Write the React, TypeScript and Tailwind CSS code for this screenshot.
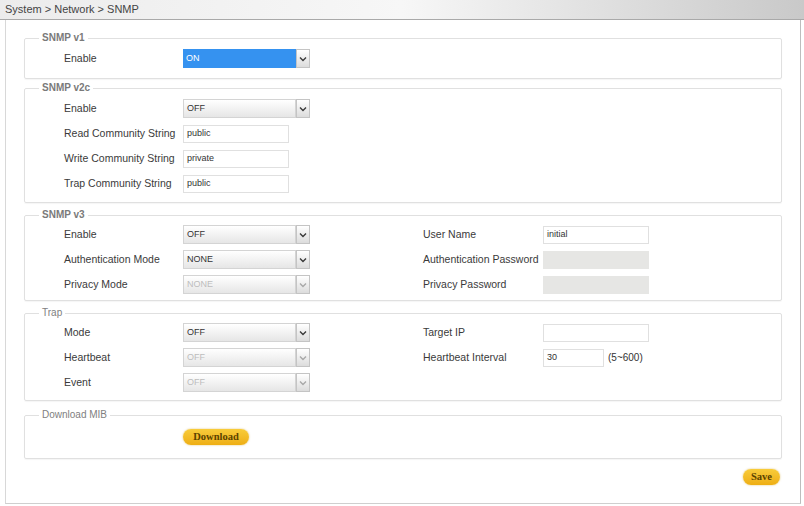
import type { ReactNode } from "react";

const font = { fontFamily: '"Liberation Sans", Arial, sans-serif' };

function Select({
	value,
	disabled,
	active,
}: {
	value: string;
	disabled?: boolean;
	active?: boolean;
}) {
	return (
		<div className="flex h-[19px] w-[127px]">
			<div
				className={
					active
						? "flex flex-1 items-center bg-[#3592f0] pl-[3px] text-[9px] text-white"
						: "flex flex-1 items-center border border-[#d4d4d4] bg-gradient-to-b from-white to-[#e6e6e6] pl-[3px] text-[9px] " +
							(disabled ? "text-[#bdbdbd]" : "text-[#333]")
				}
			>
				{value}
			</div>
			<div className="flex w-[14px] items-center justify-center border border-[#c4c4c4] bg-gradient-to-b from-white to-[#dcdcdc]">
				<svg width="8" height="6" viewBox="0 0 8 6">
					<path
						d="M1 1.5 L4 4.5 L7 1.5"
						fill="none"
						stroke={disabled ? "#a8a8a8" : "#3a3a3a"}
						strokeWidth="1.4"
					/>
				</svg>
			</div>
		</div>
	);
}

function TextBox({
	value,
	width = "w-[106px]",
	disabled,
}: {
	value?: string;
	width?: string;
	disabled?: boolean;
}) {
	return (
		<div
			className={
				disabled
					? `flex h-[18px] ${width} items-center bg-[#e6e6e4]`
					: `flex h-[18px] ${width} items-center border border-[#e0e0e0] bg-white pl-[3px] text-[9px] text-[#333]`
			}
		>
			{value}
		</div>
	);
}

function Row({
	label,
	children,
	rightLabel,
	right,
}: {
	label: string;
	children: ReactNode;
	rightLabel?: string;
	right?: ReactNode;
}) {
	return (
		<div className="flex h-[25px] items-center">
			<div className="flex w-[359px] items-center">
				<span className="w-[119px] text-[10.5px] text-[#3a3a3a]">{label}</span>
				{children}
			</div>
			{rightLabel && (
				<div className="flex items-center">
					<span className="w-[120px] text-[10.5px] text-[#3a3a3a]">
						{rightLabel}
					</span>
					{right}
				</div>
			)}
		</div>
	);
}

function Group({
	title,
	bold = true,
	className,
	bodyClass,
	children,
}: {
	title: string;
	bold?: boolean;
	className: string;
	bodyClass: string;
	children: ReactNode;
}) {
	return (
		<fieldset
			className={`rounded-[2px] border border-[#e0e0e0] shadow-[0_1px_1px_rgba(0,0,0,0.04)] ${className}`}
		>
			<legend
				className={`ml-[14px] px-[3px] text-[10px] leading-[12px] ${bold ? "font-bold text-[#7a7a7a]" : "text-[#808080]"}`}
			>
				{title}
			</legend>
			<div className={`pl-[39px] ${bodyClass}`}>{children}</div>
		</fieldset>
	);
}

function PillButton({ label, wide }: { label: string; wide?: boolean }) {
	return (
		<button
			type="button"
			className={`flex h-[16px] items-center justify-center rounded-full bg-gradient-to-b from-[#f8cc3a] to-[#eeae12] text-[10.5px] font-bold text-[#5a4300] shadow-[0_0_2px_rgba(200,150,0,0.6)] ${wide ? "w-[66px]" : "w-[37px]"}`}
			style={{ fontFamily: '"Liberation Serif", "Times New Roman", serif' }}
		>
			{label}
		</button>
	);
}

export default function App() {
	return (
		<div className="h-[506px] w-[804px] bg-white" style={font}>
			{/* breadcrumb bar */}
			<div className="flex h-[20px] items-center border-b border-[#a9a9a9] bg-gradient-to-r from-[#ececec] via-[#f7f7f7] to-[#c9c9c9] pl-[5px] text-[11px] text-[#444]">
				System &gt; Network &gt; SNMP
			</div>

			<div className="ml-[5px] mr-[3px] border-x border-b border-l-[#d8d8d8] border-r-[#bdbdbd] border-b-[#cfcfcf] pb-[18px] pl-[18px] pr-[18px] pt-[12px]">
				<Group title="SNMP v1" className="" bodyClass="pt-[2px] pb-[7px]">
					<Row label="Enable">
						<Select value="ON" active />
					</Row>
				</Group>

				<Group title="SNMP v2c" className="mt-[3px]" bodyClass="pt-[2px] pb-[6px]">
					<Row label="Enable">
						<Select value="OFF" />
					</Row>
					<Row label="Read Community String">
						<TextBox value="public" />
					</Row>
					<Row label="Write Community String">
						<TextBox value="private" />
					</Row>
					<Row label="Trap Community String">
						<TextBox value="public" />
					</Row>
				</Group>

				<Group title="SNMP v3" className="mt-[6px]" bodyClass="pt-[1px] pb-[3px]">
					<Row
						label="Enable"
						rightLabel="User Name"
						right={<TextBox value="initial" />}
					>
						<Select value="OFF" />
					</Row>
					<Row
						label="Authentication Mode"
						rightLabel="Authentication Password"
						right={<TextBox disabled />}
					>
						<Select value="NONE" />
					</Row>
					<Row
						label="Privacy Mode"
						rightLabel="Privacy Password"
						right={<TextBox disabled />}
					>
						<Select value="NONE" disabled />
					</Row>
				</Group>

				<Group
					title="Trap"
					bold={false}
					className="mt-[6px]"
					bodyClass="pt-[1px] pb-[5px]"
				>
					<Row label="Mode" rightLabel="Target IP" right={<TextBox />}>
						<Select value="OFF" />
					</Row>
					<Row
						label="Heartbeat"
						rightLabel="Heartbeat Interval"
						right={
							<div className="flex items-center gap-[4px]">
								<TextBox value="30" width="w-[61px]" />
								<span className="text-[10px] text-[#333]">(5~600)</span>
							</div>
						}
					>
						<Select value="OFF" disabled />
					</Row>
					<Row label="Event">
						<Select value="OFF" disabled />
					</Row>
				</Group>

				<Group
					title="Download MIB"
					bold={false}
					className="mt-[8px]"
					bodyClass="pt-[8px] pb-[13px]"
				>
					<div className="pl-[119px]">
						<PillButton label="Download" wide />
					</div>
				</Group>

				<div className="mt-[10px] flex justify-end pr-[2px]">
					<PillButton label="Save" />
				</div>
			</div>
		</div>
	);
}
